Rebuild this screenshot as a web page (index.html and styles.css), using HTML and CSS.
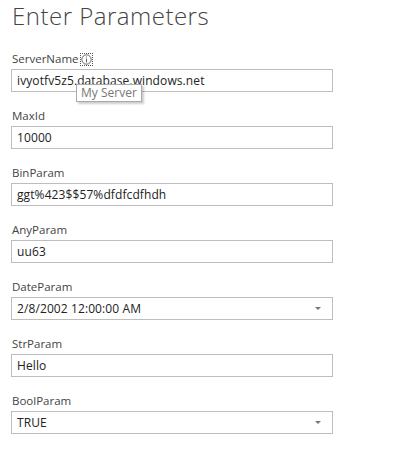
FILE: index.html
```html
<!DOCTYPE html>
<html>
<head>
<meta charset="utf-8">
<link rel="stylesheet" href="styles.css">
</head>
<body>
<div class="page">
  <h1 class="title">Enter Parameters</h1>
  <div class="fields">
    <div class="field">
      <div class="label">ServerName<span class="info"><svg width="11" height="11" viewBox="0 0 11 11"><circle cx="5.5" cy="5.5" r="4.7" fill="none" stroke="#666" stroke-width="1"/><rect x="5" y="2.5" width="1" height="1" fill="#666"/><rect x="5" y="4.5" width="1" height="4" fill="#666"/></svg></span></div>
      <div class="box">ivyotfv5z5.database.windows.net</div>
      <div class="tooltip">My Server</div>
    </div>
    <div class="field">
      <div class="label">MaxId</div>
      <div class="box">10000</div>
    </div>
    <div class="field">
      <div class="label">BinParam</div>
      <div class="box">ggt%423$$57%dfdfcdfhdh</div>
    </div>
    <div class="field">
      <div class="label">AnyParam</div>
      <div class="box">uu63</div>
    </div>
    <div class="field">
      <div class="label">DateParam</div>
      <div class="box select">2/8/2002 12:00:00 AM<span class="arrow"></span></div>
    </div>
    <div class="field">
      <div class="label">StrParam</div>
      <div class="box">Hello</div>
    </div>
    <div class="field">
      <div class="label">BoolParam</div>
      <div class="box select">TRUE<span class="arrow"></span></div>
    </div>
  </div>
</div>
</body>
</html>
```
FILE: styles.css
```css
html, body {
  margin: 0;
  padding: 0;
  background: #fff;
}
.page {
  padding: 1px 0 0 11px;
  width: 322px;
  font-family: "Open Sans", "Noto Sans", sans-serif;
}
.title {
  margin: 0;
  font-size: 24px;
  font-weight: 300;
  line-height: 30px;
  color: #444;
  padding-left: 1px;
  height: 34px;
  letter-spacing: 0.5px;
}
.fields {
  display: flex;
  flex-direction: column;
  gap: 16px;
  margin-top: 16px;
}
.field {
  position: relative;
  display: flex;
  flex-direction: column;
  gap: 2px;
}
.label {
  font-size: 11.5px;
  line-height: 16px;
  color: #444;
  padding-left: 1px;
  display: flex;
  align-items: center;
}
.info {
  display: inline-flex;
  align-items: center;
  justify-content: center;
  width: 13px;
  height: 13px;
  border: 1px dotted #555;
  box-sizing: border-box;
  margin-left: 1px;
  margin-top: 1px;
}
.box {
  box-sizing: border-box;
  height: 23px;
  border: 1px solid #bdbdbd;
  padding: 0 5px;
  font-size: 12px;
  letter-spacing: 0.1px;
  line-height: 21px;
  color: #222;
  display: flex;
  align-items: center;
}
.select {
  justify-content: space-between;
}
.arrow {
  width: 0;
  height: 0;
  border-left: 3px solid transparent;
  border-right: 3px solid transparent;
  border-top: 3px solid #777;
  margin-right: 6px;
}
.tooltip {
  position: absolute;
  left: 65px;
  top: 33px;
  background: #fff;
  border: 1px solid #aaa;
  box-shadow: 2px 2px 2px rgba(0,0,0,0.2);
  color: #777;
  font-size: 12px;
  line-height: 16px;
  padding: 0 4px;
}
```
